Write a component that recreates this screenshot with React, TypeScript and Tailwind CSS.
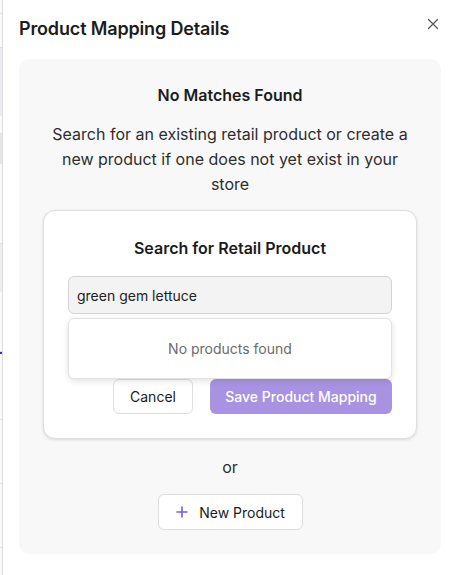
import React from "react";

export default function App() {
  const font = { fontFamily: "Inter, 'Noto Sans', sans-serif" } as React.CSSProperties;
  return (
    <div className="flex h-[575px] w-[454px] overflow-hidden bg-white" style={font}>
      {/* background page sliver */}
      <div className="flex w-[3px] shrink-0 flex-col border-r border-[#dcdcdc] bg-[#fafafa]">
        <div className="h-[14px] border-b border-[#e2e2e2]" />
        <div className="h-[34px] border-b border-[#e2e2e2]" />
        <div className="h-[68px] bg-[#ececf8]" />
        <div className="h-[18px] border-b border-[#e2e2e2]" />
        <div className="h-[30px] bg-[#e6e6e6]" />
        <div className="h-[80px] border-b border-[#e2e2e2]" />
        <div className="h-[48px] bg-[#efefef]" />
        <div className="h-[60px] border-b border-[#e2e2e2]" />
        <div className="h-[2px] bg-[#3b2fb0]" />
        <div className="h-[66px] border-b border-[#e2e2e2]" />
        <div className="h-[64px] border-b border-[#e2e2e2]" />
        <div className="h-[64px] border-b border-[#e2e2e2]" />
        <div className="flex-1" />
      </div>

      {/* dialog */}
      <div className="flex flex-1 flex-col pb-[21px] pl-4 pr-[13px]">
        <div className="flex items-start justify-between pt-[15px]">
          <h2 className="text-[18px] font-semibold leading-7 tracking-[-0.15px] text-[#1c1c1c]">Product Mapping Details</h2>
          <button className="mr-[1px] mt-[2px] text-[#5a5a5a]" aria-label="Close">
            <svg width="14" height="14" viewBox="0 0 14 14" fill="none" stroke="currentColor" strokeWidth="1.3" strokeLinecap="round">
              <path d="M2.5 2.5 L11.5 11.5 M11.5 2.5 L2.5 11.5" />
            </svg>
          </button>
        </div>

        <div className="mt-4 flex flex-1 flex-col items-center rounded-[10px] bg-[#f8f8f8] px-6 pt-6">
          <h3 className="text-[16px] font-semibold leading-6 text-[#1c1c1c]">No Matches Found</h3>
          <p className="mt-[15px] text-center text-[16px] leading-[25px] text-[#2e2e2e]">
            Search for an existing retail product or create a new product if one does not yet exist in your store
          </p>

          <div className="mt-[13px] w-full rounded-[12px] border border-[#dedede] bg-white px-6 pb-6 pt-[25px] shadow-[0_1px_3px_rgba(0,0,0,0.12)]">
            <h4 className="text-center text-[16px] font-semibold leading-6 text-[#1c1c1c]">Search for Retail Product</h4>
            <div className="relative mt-4">
              <div className="flex h-[38px] items-center rounded-[6px] border border-[#d4d4d4] bg-[#f3f3f3] px-2 text-[14px] text-[#222]">
                green gem lettuce
              </div>
              <div className="absolute left-0 right-0 top-[42px] z-10 flex h-[61px] items-center justify-center rounded-[6px] border border-[#e2e2e2] bg-white text-[14px] text-[#6b6b6b] shadow-[0_2px_6px_rgba(0,0,0,0.12)]">
                No products found
              </div>
            </div>
            <div className="mt-[65px] flex justify-end gap-[17px]">
              <button className="h-[35px] w-[80px] rounded-[6px] border border-[#dedede] bg-white text-[14px] text-[#1c1c1c]">
                Cancel
              </button>
              <button className="h-[35px] w-[182px] rounded-[6px] bg-[#a893e2] text-[14px] font-medium text-white">
                Save Product Mapping
              </button>
            </div>
          </div>

          <div className="mt-4 text-[16px] leading-6 text-[#2e2e2e]">or</div>
          <button className="mt-[15px] flex h-[36px] w-[145px] items-center justify-center gap-[10px] rounded-[6px] border border-[#dedede] bg-white text-[14px] text-[#1c1c1c]">
            <svg width="14" height="14" viewBox="0 0 14 14" fill="none" stroke="#7a5be0" strokeWidth="1.6" strokeLinecap="round">
              <path d="M7 2 V12 M2 7 H12" />
            </svg>
            New Product
          </button>
        </div>
      </div>
    </div>
  );
}
